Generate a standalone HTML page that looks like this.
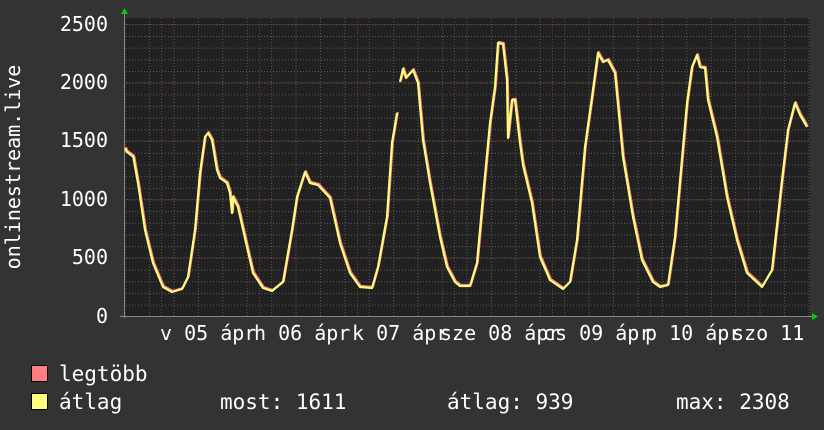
<!DOCTYPE html>
<html><head><meta charset="utf-8"><style>
html,body{margin:0;padding:0;background:#333333;}
svg{display:block}
text{font-family:"DejaVu Sans Mono","Liberation Mono",monospace;fill:#ffffff;}
</style></head><body>
<svg width="824" height="430" viewBox="0 0 824 430" xmlns="http://www.w3.org/2000/svg">
<defs>
<pattern id="hmin" x="0" y="24.3" width="824" height="11.68" patternUnits="userSpaceOnUse">
<line x1="0" y1="0.5" x2="824" y2="0.5" stroke="#5a5a5a" stroke-width="1" stroke-dasharray="1,2"/>
</pattern>
<pattern id="vmin" x="124.6" y="0" width="24.42" height="430" patternUnits="userSpaceOnUse">
<line x1="0.5" y1="0" x2="0.5" y2="430" stroke="#5a5a5a" stroke-width="1" stroke-dasharray="1,2"/>
</pattern>
</defs>
<rect x="0" y="0" width="824" height="430" fill="#333333"/>
<rect x="124" y="18" width="686" height="298" fill="#212121"/>
<rect x="124" y="18" width="686" height="298" fill="url(#hmin)"/>
<rect x="124" y="18" width="686" height="298" fill="url(#vmin)"/>
<g stroke="#7a3a3a" stroke-width="1" stroke-dasharray="1,2">
<line x1="124" y1="24.5" x2="810" y2="24.5"/>
<line x1="124" y1="82.5" x2="810" y2="82.5"/>
<line x1="124" y1="140.5" x2="810" y2="140.5"/>
<line x1="124" y1="199.5" x2="810" y2="199.5"/>
<line x1="124" y1="257.5" x2="810" y2="257.5"/>
<line x1="161.5" y1="18" x2="161.5" y2="316"/>
<line x1="259.5" y1="18" x2="259.5" y2="316"/>
<line x1="357.5" y1="18" x2="357.5" y2="316"/>
<line x1="454.5" y1="18" x2="454.5" y2="316"/>
<line x1="552.5" y1="18" x2="552.5" y2="316"/>
<line x1="650.5" y1="18" x2="650.5" y2="316"/>
<line x1="748.5" y1="18" x2="748.5" y2="316"/>
</g>
<line x1="124.5" y1="14" x2="124.5" y2="318" stroke="#888" stroke-width="1"/>
<line x1="120" y1="316.5" x2="812" y2="316.5" stroke="#888" stroke-width="1"/>
<polygon points="121,14 124.5,8 128,14" fill="#00cc00"/>
<polygon points="812,313 818,316.5 812,320" fill="#00cc00"/>
<g fill="none" stroke-linejoin="round" stroke-width="2.2">
<polyline stroke="#ff7f7f" transform="translate(0.8,-1)" points="125,148.3 126.7,151.7 133.3,156.7 138,183 145,230 153,263 163,287 172,292 182,289 188,277 195,230 200,173 205,137 208,133 212,140 217,170 220,178 227,183 230,193 232,213 233,197 238,207 247,247 253,273 263,288 272,291 283,282 292,230 297,197 305,172 310,183 318,185 330,198 340,243 350,273 360,287 372,288 378,267 387,217 392,143 397,113"/>
<polyline stroke="#ff7f7f" transform="translate(0.8,-1)" points="400,82 403,69 406,78 413,70 418,83 423,140 430,183 440,237 447,267 455,282 460,286 470,286 477,263 483,197 490,123 495,87 498,43 503,44 507,80 508,138 512,100 515,100 520,143 523,165 532,203 540,257 550,280 563,289 570,282 577,240 585,147 592,97 598,53 603,62 608,60 615,73 623,157 633,217 642,260 653,282 660,287 668,285 675,237 687,103 692,67 697,55 700,67 705,68 708,100 717,137 727,197 737,240 747,273 762,287 772,270 782,180 788,130 795,103 800,115 803,120 807,127"/>
<polyline stroke="#ffff7f" points="125,148.3 126.7,151.7 133.3,156.7 138,183 145,230 153,263 163,287 172,292 182,289 188,277 195,230 200,173 205,137 208,133 212,140 217,170 220,178 227,183 230,193 232,213 233,197 238,207 247,247 253,273 263,288 272,291 283,282 292,230 297,197 305,172 310,183 318,185 330,198 340,243 350,273 360,287 372,288 378,267 387,217 392,143 397,113"/>
<polyline stroke="#ffff7f" points="400,82 403,69 406,78 413,70 418,83 423,140 430,183 440,237 447,267 455,282 460,286 470,286 477,263 483,197 490,123 495,87 498,43 503,44 507,80 508,138 512,100 515,100 520,143 523,165 532,203 540,257 550,280 563,289 570,282 577,240 585,147 592,97 598,53 603,62 608,60 615,73 623,157 633,217 642,260 653,282 660,287 668,285 675,237 687,103 692,67 697,55 700,67 705,68 708,100 717,137 727,197 737,240 747,273 762,287 772,270 782,180 788,130 795,103 800,115 803,120 807,127"/>
</g>
<g font-size="20" text-anchor="end">
<text x="108" y="31">2500</text>
<text x="108" y="89">2000</text>
<text x="108" y="147">1500</text>
<text x="108" y="206">1000</text>
<text x="108" y="264">500</text>
<text x="108" y="323">0</text>
</g>
<text font-size="20" transform="translate(20,167) rotate(-90)" text-anchor="middle">onlinestream.live</text>
<g font-size="20">
<text x="160" y="340">v 05 ápr</text>
<text x="254" y="340">h 06 ápr</text>
<text x="352" y="340">k 07 ápr</text>
<text x="440" y="340">sze 08 ápr</text>
<text x="543" y="340">cs 09 ápr</text>
<text x="645" y="340">p 10 ápr</text>
<text x="732" y="340">szo 11</text>
</g>
<rect x="31.5" y="365.5" width="16" height="16" fill="#ff7f7f" stroke="#000" stroke-width="1"/>
<rect x="31.5" y="393.5" width="16" height="16" fill="#ffff7f" stroke="#000" stroke-width="1"/>
<g font-size="21">
<text x="59" y="381">legtöbb</text>
<text x="59" y="409">átlag</text>
<text x="220" y="409">most: 1611</text>
<text x="447" y="409">átlag: 939</text>
<text x="676" y="409">max: 2308</text>
</g>
</svg>
</body></html>
